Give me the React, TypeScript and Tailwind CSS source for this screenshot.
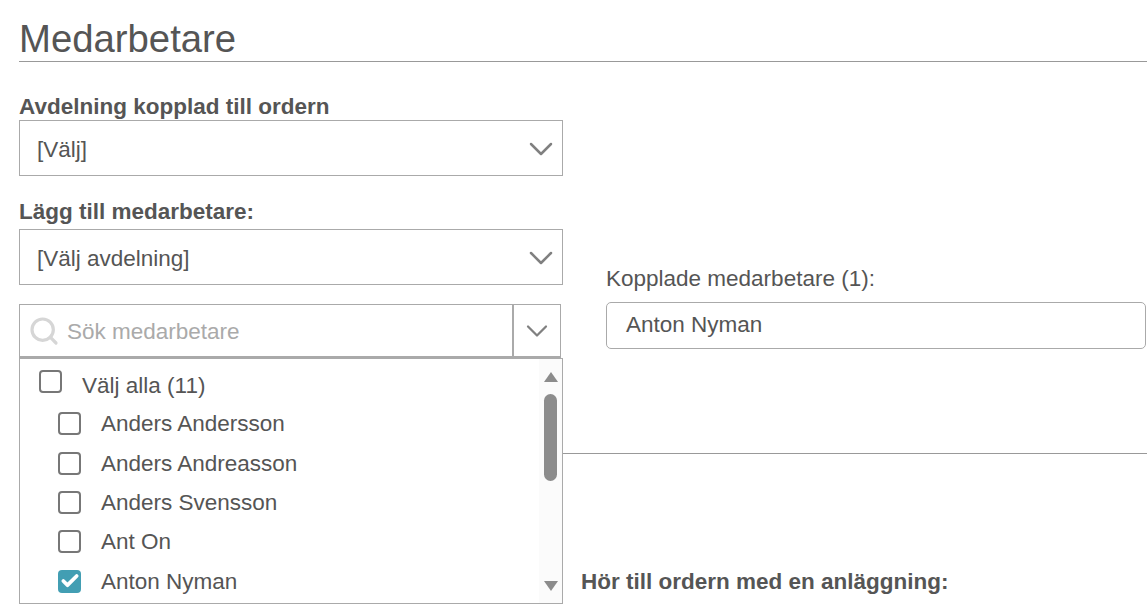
import { Check, ChevronDown, Search } from 'lucide-react';

const employees = [
  { name: 'Anders Andersson', checked: false },
  { name: 'Anders Andreasson', checked: false },
  { name: 'Anders Svensson', checked: false },
  { name: 'Ant On', checked: false },
  { name: 'Anton Nyman', checked: true },
];

function SelectBox({ value }: { value: string }) {
  return (
    <div className="flex items-center justify-between h-[56px] w-[544px] border border-[#aaa] pl-[17px] pr-[1px] bg-white">
      <span className="pt-[3px]">{value}</span>
      <ChevronDown className="w-[40px] h-[40px] text-[#808080] mt-[1px]" strokeWidth={1.5} />
    </div>
  );
}

function Box({ checked, className = '' }: { checked?: boolean; className?: string }) {
  if (checked) {
    return (
      <span className={`flex items-center justify-center w-[23px] h-[23px] rounded-[4px] bg-[#429eb3] ${className}`}>
        <Check className="w-[20px] h-[20px] text-white" strokeWidth={4.5} />
      </span>
    );
  }
  return <span className={`block w-[23px] h-[23px] rounded-[4px] border-2 border-[#777] bg-white ${className}`} />;
}

export default function App() {
  return (
    <div className="h-[604px] w-[1147px] overflow-hidden bg-white pl-[19px] text-[#555] text-[22.5px] font-['Liberation_Sans',Arial,sans-serif]">
      {/* Section header */}
      <h1 className="h-[62px] pt-[16px] text-[38.3px] leading-[46px] border-b border-[#999]">Medarbetare</h1>

      <div className="flex pt-[30px]">
        <div className="w-[544px]">
          <label className="block h-[28px] font-bold leading-[30px]">Avdelning kopplad till ordern</label>
          <SelectBox value="[Välj]" />
          <label className="block h-[28px] font-bold leading-[30px] mt-[21px] mb-[4px]">Lägg till medarbetare:</label>
          <SelectBox value="[Välj avdelning]" />

          <div className="relative mt-[19px]">
            <div className="flex h-[54px] w-[542px] border border-[#aaa] border-b-2 bg-white">
              <div className="flex flex-1 items-center pl-[8px] gap-[7px]">
                <Search className="w-[32px] h-[32px] text-[#d6d6d6]" strokeWidth={2.4} />
                <span className="text-[#aaa] pt-[2px]">Sök medarbetare</span>
              </div>
              <div className="flex items-center justify-center w-[48px] border-l-2 border-[#aaa]">
                <ChevronDown className="w-[36px] h-[36px] text-[#808080]" strokeWidth={1.5} />
              </div>
            </div>

            {/* Open dropdown lies over the rule below */}
            <div className="absolute left-0 top-[54px] z-10 flex h-[246px] w-[544px] border border-[#aaa] bg-white">
              <div className="flex-1">
                <div className="flex items-start h-[45px] pl-[19px] gap-[20px]">
                  <Box className="mt-[11px]" />
                  <span className="mt-[13px] leading-[28px]">Välj alla (11)</span>
                </div>
                {employees.map((e) => (
                  <div key={e.name} className="flex items-center h-[39.4px] pl-[38px] gap-[20px]">
                    <Box checked={e.checked} />
                    <span className="pt-[1px]">{e.name}</span>
                  </div>
                ))}
              </div>
              <div className="flex flex-col items-center w-[23px] bg-[#fbfbfb] pt-[13px] pb-[12px]">
                <span className="w-0 h-0 border-x-[7px] border-x-transparent border-b-[10px] border-b-[#8c8c8c]" />
                <span className="mt-[12px] w-[13px] h-[87px] rounded-full bg-[#8c8c8c]" />
                <span className="mt-auto w-0 h-0 border-x-[7px] border-x-transparent border-t-[10px] border-t-[#8c8c8c]" />
              </div>
            </div>
          </div>
        </div>

        <div className="flex-1 pl-[43px] pt-[173px]">
          <div className="leading-[28px] mb-[9px]">Kopplade medarbetare (1):</div>
          <div className="flex items-center h-[47px] w-[540px] rounded-[5px] border border-[#aaa] pl-[19px] pb-[2px]">Anton Nyman</div>
        </div>
      </div>

      <div className="mt-[95px] border-t border-[#999] pl-[562px] pt-[114px]">
        <div className="font-bold leading-[28px]">Hör till ordern med en anläggning:</div>
      </div>
    </div>
  );
}
